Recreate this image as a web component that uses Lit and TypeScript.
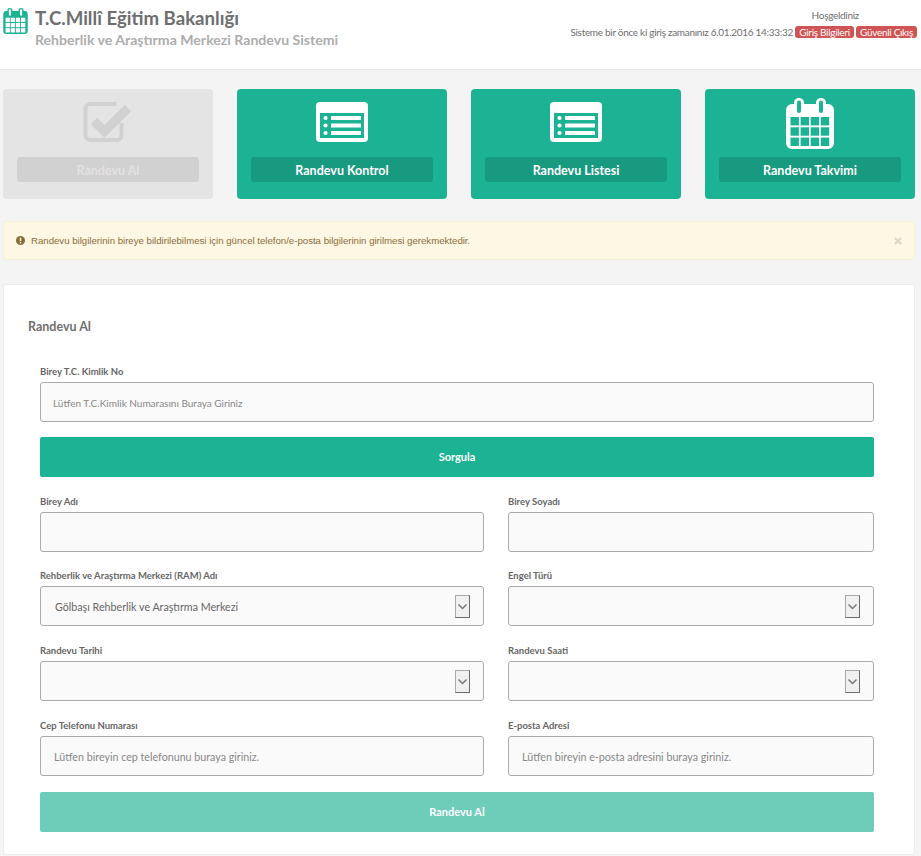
import { LitElement, html, css, svg } from "lit";
import { customElement } from "lit/decorators.js";

const calendar = () => svg`
  <path d="M6 6h2V4.500a5 4.500 0 0 1 10 0V6h12V4.500a5 4.500 0 0 1 10 0V6H42a6 6 0 0 1 6 6v33a6 6 0 0 1-6 6H6a6 6 0 0 1-6-6V12a6 6 0 0 1 6-6z" fill="currentColor"/>
  <rect x="11" y="2.500" width="4" height="12.500" rx="2" fill="var(--cut)"/>
  <rect x="33" y="2.500" width="4" height="12.500" rx="2" fill="var(--cut)"/>
  ${[0, 1, 2, 3].map((c) =>
    [0, 1, 2].map((r) => svg`<rect x=${4.5 + c * 10.1} y=${19 + r * 10.3} width="8.400" height="8.400" fill="var(--cut)"/>`)
  )}`;

const listIcon = () => html`<svg class="ic" width="52" height="40" viewBox="0 0 52 40">
  <rect width="52" height="40" rx="4" fill="#fff"/>
  <rect x="4" y="11" width="44" height="25" fill="#1bb394"/>
  ${[16, 23.5, 31].map((y) => svg`<circle cx="9.500" cy=${y} r="2.100" fill="#fff"/><rect x="15" y=${y - 2} width="30" height="4" rx=".5" fill="#fff"/>`)}
</svg>`;

@customElement("app-root")
export class AppRoot extends LitElement {
  static styles = css`
    :host { display: block; min-height: 856px; background: #f4f4f4; font-family: "Open Sans", "Noto Sans", sans-serif; color: #666; overflow: hidden; }
    * { box-sizing: border-box; }
    header { height: 70px; background: #fff; border-bottom: 1px solid #e6e6e6; display: flex; justify-content: space-between; padding: 0 4px 0 3px; }
    .brand { display: flex; gap: 7px; padding-top: 8px; }
    .logo { --cut: #fff; color: #1bb394; flex: none; }
    h1 { margin: 0; font: 700 18.6px/20px Lato, sans-serif; color: #6d6e70; }
    h2 { margin: 3px 0 0; font: 700 14.1px/18px Lato, sans-serif; color: #adadad; }
    .user { text-align: right; font: 400 10px/14px Lato, sans-serif; letter-spacing: -0.3px; color: #6f6f6f; padding-top: 8px; }
    .hello { padding-right: 58px; margin-bottom: 3px; }
    .badge { display: inline-block; background: #d05454; color: #fff; border-radius: 3px; height: 12px; line-height: 12px; padding: 0 4px; }
    .cards { display: grid; grid-template-columns: repeat(4, 210px); gap: 24px; padding: 19px 0 0 3px; }
    .card { height: 110px; background: #1bb394; border-radius: 4px; display: flex; flex-direction: column; align-items: center; padding-top: 13px; position: relative; }
    .ic { display: block; }
    .bar { position: absolute; left: 14px; right: 14px; top: 68px; height: 25px; background: #189a80; border-radius: 3px; color: #fff; font: 700 12.5px/27px Lato, sans-serif; text-align: center; }
    .off { background: #e5e4e4; }
    .off .bar { background: #d2d1d1; color: #e2e1e1; }
    .cal { margin-top: -4px; color: #fff; --cut: #1bb394; }
    .alert { margin: 22px 6px 0 3px; height: 39px; background: #fef7e3; border: 1px solid #fbefd6; border-radius: 3px; display: flex; align-items: center; padding: 0 12px; color: #8a6d3b; font: 400 9.65px/12px "Liberation Sans", sans-serif; gap: 6px; }
    .alert span { flex: 1; }
    .x { color: #ded7c0; flex: none; }
    .panel { margin: 24px 6px 0 3px; height: 571px; background: #fff; border: 1px solid #ececec; border-radius: 3px; padding: 35px 40px 0 36px; }
    h3 { margin: 0 0 0 -12px; font: 700 12.5px/14px Lato, sans-serif; color: #707070; }
    .full { margin-top: 30px; }
    .full label { line-height: 16px; }
    label { display: block; font: 700 9.5px/15px Lato, sans-serif; color: #666; margin-bottom: 4px; height: 14px; }
    .input { display: block; width: 100%; height: 40px; background: #fafafa; border: 1px solid #aaa; border-radius: 3px; font: 400 10px/40px Lato, sans-serif; color: #888; padding: 0 12px; }
    .input.big { font-size: 10.7px; padding-left: 13px; }
    .input.val { color: #666; padding-left: 14px; }
    .btn { height: 40px; background: #1bb394; color: #fff; border-radius: 2px; text-align: center; font: 700 11px/40px Lato, sans-serif; }
    .sorgu { margin: 15px 0 16.6px; }
    .grid { display: grid; grid-template-columns: 444px 366px; column-gap: 24px; row-gap: 16.67px; }
    .field { min-width: 0; }
    .sel { position: relative; }
    .arrow { position: absolute; right: 14px; top: 9px; width: 15px; height: 23px; background: #f0f0f0; border: 1px solid #a8a8a8; border-right-color: #6c6c6c; border-bottom-color: #6c6c6c; display: flex; align-items: center; justify-content: center; }
    .send { background: #6dcdb8; margin-top: 16px; }
  `;

  private field(name: string, opts: { ph?: string; val?: string; sel?: boolean } = {}) {
    return html`<div class="field">
      <label>${name}</label>
      <div class="sel">
        <div class="input big ${opts.val ? "val" : ""}">${opts.ph ?? opts.val ?? ""}</div>
        ${opts.sel
          ? html`<div class="arrow"><svg width="11" height="7" viewBox="0 0 11 7"><path d="M1.500 1.500l4 4 4-4" fill="none" stroke="#777" stroke-width="1.500"/></svg></div>`
          : ""}
      </div>
    </div>`;
  }

  render() {
    return html`
      <header>
        <div class="brand">
          <svg class="logo" width="25" height="26" viewBox="0 0 48 51">${calendar()}</svg>
          <div>
            <h1>T.C.Millî Eğitim Bakanlığı</h1>
            <h2>Rehberlik ve Araştırma Merkezi Randevu Sistemi</h2>
          </div>
        </div>
        <div class="user">
          <div class="hello">Hoşgeldiniz</div>
          <div>Sisteme bir önce ki giriş zamanınız 6.01.2016 14:33:32 <span class="badge">Giriş Bilgileri</span> <span class="badge">Güvenli Çıkış</span></div>
        </div>
      </header>

      <section class="cards">
        <div class="card off">
          <svg class="ic" width="50" height="40" viewBox="0 0 50 40" style="margin-left:-1px">
            <path d="M33 2H7a5 5 0 0 0-5 5v26a5 5 0 0 0 5 5h26a5 5 0 0 0 5-5V21" fill="none" stroke="#d2d1d1" stroke-width="4" transform="translate(.5 0)"/>
            <path d="M11 19l10.500 10.500L45 6" fill="none" stroke="#d2d1d1" stroke-width="9"/>
          </svg>
          <div class="bar">Randevu Al</div>
        </div>
        <div class="card">${listIcon()}<div class="bar">Randevu Kontrol</div></div>
        <div class="card">${listIcon()}<div class="bar">Randevu Listesi</div></div>
        <div class="card">
          <svg class="ic cal" width="48" height="51" viewBox="0 0 48 51">${calendar()}</svg>
          <div class="bar">Randevu Takvimi</div>
        </div>
      </section>

      <div class="alert">
        <svg width="9" height="9" viewBox="0 0 9 9"><circle cx="4.500" cy="4.500" r="4.500" fill="#8a6d3b"/><rect x="3.800" y="1.600" width="1.400" height="3.600" fill="#fef7e3"/><rect x="3.800" y="6" width="1.400" height="1.400" fill="#fef7e3"/></svg>
        <span>Randevu bilgilerinin bireye bildirilebilmesi için güncel telefon/e-posta bilgilerinin girilmesi gerekmektedir.</span>
        <svg class="x" width="8" height="8" viewBox="0 0 8 8"><path d="M1 1l6 6M7 1L1 7" stroke="currentColor" stroke-width="2.200"/></svg>
      </div>

      <section class="panel">
        <h3>Randevu Al</h3>
        <div class="full">
          <label>Birey T.C. Kimlik No</label>
          <div class="input">Lütfen T.C.Kimlik Numarasını Buraya Giriniz</div>
        </div>
        <div class="btn sorgu">Sorgula</div>
        <div class="grid">
          ${this.field("Birey Adı")}
          ${this.field("Birey Soyadı")}
          ${this.field("Rehberlik ve Araştırma Merkezi (RAM) Adı", { val: "Gölbaşı Rehberlik ve Araştırma Merkezi", sel: true })}
          ${this.field("Engel Türü", { sel: true })}
          ${this.field("Randevu Tarihi", { sel: true })}
          ${this.field("Randevu Saati", { sel: true })}
          ${this.field("Cep Telefonu Numarası", { ph: "Lütfen bireyin cep telefonunu buraya giriniz." })}
          ${this.field("E-posta Adresi", { ph: "Lütfen bireyin e-posta adresini buraya giriniz." })}
        </div>
        <div class="btn send">Randevu Al</div>
      </section>
    `;
  }
}
